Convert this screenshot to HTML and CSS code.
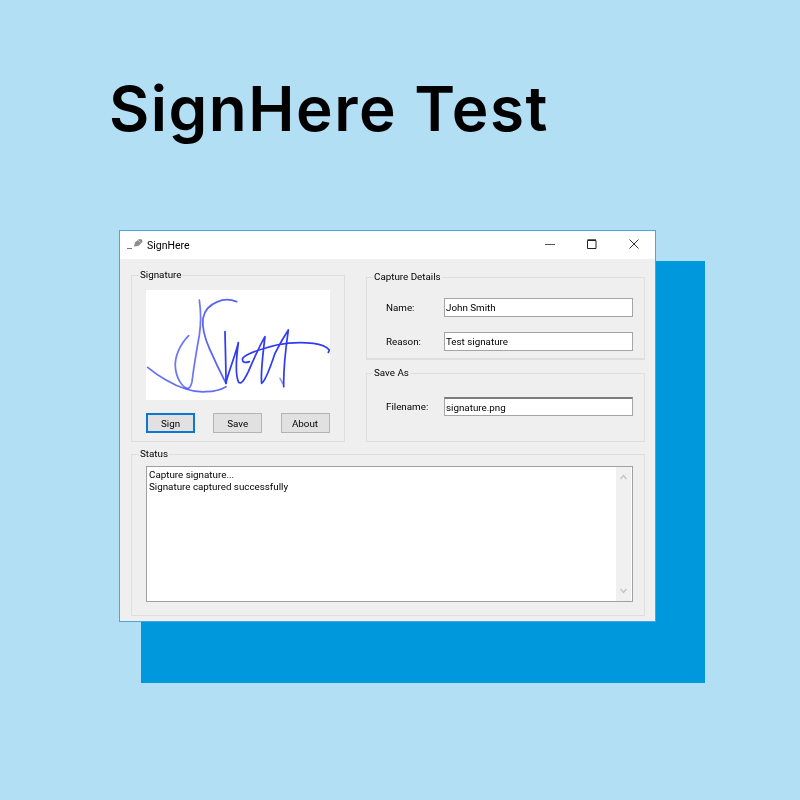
FILE: index.html
```html
<!DOCTYPE html>
<html>
    <head>
        <title>SignHere Test</title>
        <link rel="stylesheet" href="styles.css">
    </head>
    <body>
        <h1 class="headline">SignHere Test</h1>

        <div class="stage">
            <div class="window">
                <div class="titlebar">
                    <svg class="app-icon" width="16" height="14" viewBox="0 0 16 14">
                        <path d="M0 11.500h5" stroke="#777" fill="none"/>
                        <path d="M7 9.500l1-4 4-3.500 3 .5 .5 2.500-3.500 3.500-4 1z" fill="#8c8c8c"/>
                        <path d="M11 3l2.500 2.500" stroke="#c8c8c8" fill="none"/>
                    </svg>
                    <span class="app-name">SignHere</span>
                    <div class="controls">
                        <svg width="10" height="10" viewBox="0 0 10 10"><path d="M0 5.500h10" stroke="#555" fill="none"/></svg>
                        <svg width="10" height="10" viewBox="0 0 10 10"><path d="M.5 1.500h8.500v8h-8.500z M.5 .8h8.500" stroke="#222" fill="none"/></svg>
                        <svg width="10" height="10" viewBox="0 0 10 10"><path d="M.5 .5l9 9M9.500 .5l-9 9" stroke="#333" fill="none"/></svg>
                    </div>
                </div>

                <div class="window-body">
                    <div class="group signature-group">
                        <span class="group-title">Signature</span>
                        <svg class="signature" width="184" height="110" viewBox="18 15 552 330">
                            <g fill="none" stroke="#2f3cf2" stroke-width="5.200" stroke-linecap="round" stroke-linejoin="round">
                                <!-- J and its loop -->
                                <path opacity=".7" d="M178 45C183 80 184 110 178 150C170 195 162 240 156 290C153 305 148 310 143 310C128 308 108 280 106 245C104 215 120 178 146 152"/>
                                <!-- long low stroke -->
                                <path opacity=".75" d="M23 247C45 265 60 275 78 285C100 298 118 306 138 312C160 320 180 321 198 320C225 319 245 313 258 305"/>
                                <!-- S -->
                                <path opacity=".8" d="M290 50C268 41 250 42 233 50C208 60 193 78 189 100C186 125 195 160 208 190C222 222 240 260 258 295"/>
                                <!-- m i t h -->
                                <path d="M255 140C256 190 258 250 258 295"/>
                                <path d="M258 295C262 270 285 215 295 173C290 210 285 270 296 292C305 300 315 280 325 260C340 225 360 180 375 155C370 195 362 270 365 295C375 290 390 250 405 205C420 175 435 150 445 135C440 170 430 250 431 305"/>
                                <path d="M328 230C315 235 305 232 308 220C320 205 370 190 410 180C450 172 490 172 520 175C545 178 560 185 568 195L565 202"/>
                                <path opacity=".5" d="M420 280L428 295"/>
                            </g>
                        </svg>
                        <div class="buttons">
                            <button class="btn btn-default">Sign</button>
                            <button class="btn">Save</button>
                            <button class="btn">About</button>
                        </div>
                    </div>

                    <div class="right-col">
                        <div class="group capture-group">
                            <span class="group-title">Capture Details</span>
                            <label class="field">
                                <span class="field-label">Name:</span>
                                <input class="field-input" type="text" value="John Smith">
                            </label>
                            <label class="field">
                                <span class="field-label">Reason:</span>
                                <input class="field-input" type="text" value="Test signature">
                            </label>
                        </div>
                        <div class="group save-group">
                            <span class="group-title">Save As</span>
                            <label class="field">
                                <span class="field-label">Filename:</span>
                                <input class="field-input field-input-focus" type="text" value="signature.png">
                            </label>
                        </div>
                    </div>

                    <div class="group status-group">
                        <span class="group-title">Status</span>
                        <div class="log">
                            <div class="log-text">
                                <div>Capture signature...</div>
                                <div>Signature captured successfully</div>
                            </div>
                            <div class="scrollbar">
                                <svg width="7" height="6" viewBox="0 0 7 6"><path d="M.5 5L3.500 1.500 6.500 5" stroke="#c4c4c4" stroke-width="1.400" fill="none"/></svg>
                                <svg width="7" height="6" viewBox="0 0 7 6"><path d="M.5 1L3.500 4.500 6.500 1" stroke="#c4c4c4" stroke-width="1.400" fill="none"/></svg>
                            </div>
                        </div>
                    </div>
                </div>
            </div>
        </div>
    </body>
</html>
```

FILE: styles.css
```css
body {
  margin: 0;
  height: 800px;
  overflow: hidden;
  background: #b2dff4;
}

.headline {
  margin: 70px 0 0 109px;
  height: 80px;
  font-family: Inter, sans-serif;
  font-weight: 600;
  font-size: 62px;
  letter-spacing: 1.500px;
  line-height: 78px;
  color: #000;
}

/* blue block sitting behind the app window */
.stage {
  position: relative;
  width: 564px;
  height: 422px;
  margin: 111px 0 0 141px;
  background: #0098dc;
}

.window {
  position: absolute;
  left: -22px;
  top: -31px;
  width: 535px;
  height: 390px;
  display: flex;
  flex-direction: column;
  border: 1px solid #4ea3e0;
  background: #efefef;
  font-family: Roboto, sans-serif;
  font-size: 9.800px;
  color: #000;
  filter: blur(.3px);
}

.titlebar {
  display: flex;
  align-items: center;
  height: 28px;
  padding: 0 16px 2px 7px;
  box-sizing: border-box;
  background: #fff;
}

.app-icon {
  margin-right: 4px;
}

.app-name {
  margin-top: 2px;
  font-size: 10.500px;
}

.controls {
  display: flex;
  gap: 32px;
  margin-left: auto;
}

.window-body {
  display: grid;
  grid-template-columns: 214px 279px;
  grid-template-rows: 167px 162px;
  column-gap: 21px;
  row-gap: 12px;
  padding: 16px 11px 0;
}

.group {
  position: relative;
  box-sizing: border-box;
  border: 1px solid #dedede;
}

.group-title {
  position: absolute;
  top: -7px;
  left: 7px;
  padding: 0 1px;
  line-height: 12px;
  background: #efefef;
}

.right-col .group-title {
  left: 6px;
}

.signature-group {
  padding: 14px 0 0 14px;
}

.signature {
  display: block;
  background: #fff;
}

.buttons {
  display: flex;
  justify-content: space-between;
  width: 183.500px;
  margin-top: 13px;
}

.btn {
  box-sizing: border-box;
  width: 49px;
  height: 20px;
  padding: 0;
  border: 1px solid #b4b4b4;
  background: #e1e1e1;
  font: inherit;
  color: inherit;
}

.btn-default {
  border: 2px solid #0a78d2;
}

.right-col {
  display: flex;
  flex-direction: column;
  gap: 13px;
  padding-top: 2px;
}

.capture-group {
  height: 83px;
  padding: 20px 10px 0 19px;
  border-bottom-width: 2px;
}

.save-group {
  flex: 1;
  padding: 23px 10px 0 19px;
}

.field {
  display: flex;
  align-items: center;
  margin-bottom: 15px;
}

.field-label {
  width: 58px;
}

.field-input {
  box-sizing: border-box;
  width: 189px;
  height: 19px;
  padding: 0 1px;
  border: 1px solid #a5a5a5;
  border-radius: 0;
  outline: none;
  background: #fff;
  font: inherit;
  color: inherit;
}

.field-input-focus {
  border-top: 2px solid #7d7d7d;
}

.status-group {
  grid-column: 1 / 3;
  padding: 11px 11px 0 14px;
}

.log {
  display: flex;
  height: 134px;
  border: 1px solid #a0a0a0;
  background: #fff;
}

.log-text {
  flex: 1;
  padding: 2px;
  line-height: 12px;
}

.scrollbar {
  display: flex;
  flex-direction: column;
  justify-content: space-between;
  align-items: center;
  box-sizing: border-box;
  width: 15px;
  margin-right: 1px;
  padding: 7px 0;
  background: #f0f0f0;
}
```
